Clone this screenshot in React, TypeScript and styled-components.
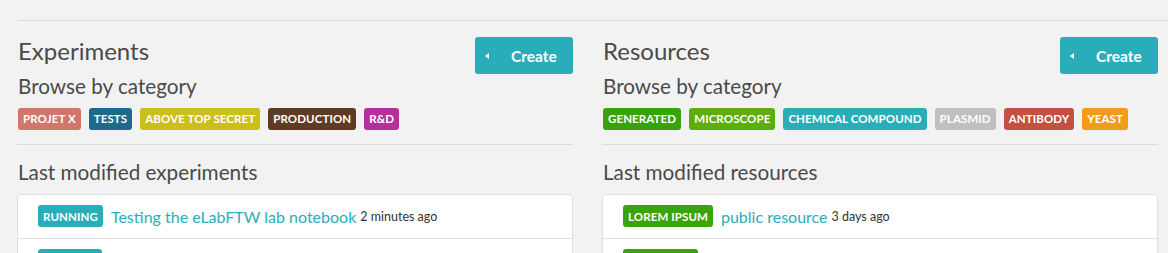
import React from "react";
import styled, { createGlobalStyle } from "styled-components";

const GlobalStyle = createGlobalStyle`
  html, body {
    margin: 0;
    padding: 0;
    background: #f2f2f2;
    font-family: "Lato", "Open Sans", sans-serif;
    color: #4a4a4a;
    overflow: hidden;
  }
`;

const Page = styled.div`
  padding: 20px 0 0 18px;
`;

const Section = styled.div`
  border-top: 1px solid #dcdcdc;
  display: grid;
  grid-template-columns: 554px 554px;
  column-gap: 31px;
  padding-top: 16px;
`;

const Column = styled.div`
  display: flex;
  flex-direction: column;
`;

const HeaderRow = styled.div`
  display: flex;
  justify-content: space-between;
  align-items: flex-start;
  height: 37px;
`;

const Title = styled.h2`
  margin: 0;
  font-size: 24px;
  font-weight: 400;
  line-height: 1.2;
  color: #4a4a4a;
`;

const SubTitle = styled.h3`
  margin: 0;
  font-size: 20.7px;
  font-weight: 400;
  line-height: 1.2;
  color: #4a4a4a;
`;

const CreateButton = styled.button`
  display: flex;
  align-items: center;
  height: 37px;
  width: 98px;
  margin-right: -1px;
  padding: 0 12px 0 10px;
  border: none;
  border-radius: 3px;
  background: #29aeb9;
  color: #fff;
  font-family: "Lato", sans-serif;
  font-size: 15.5px;
  font-weight: 700;
  cursor: pointer;
`;

const Caret = styled.span`
  width: 0;
  height: 0;
  border-top: 3.5px solid transparent;
  border-bottom: 3.5px solid transparent;
  border-right: 4px solid #fff;
  margin-right: 22px;
`;

const BadgeList = styled.div`
  display: flex;
  gap: 8px;
  margin-top: 9px;
`;

const Badge = styled.span<{ $bg: string }>`
  display: inline-flex;
  align-items: center;
  height: 22px;
  padding: 0 5px;
  border-radius: 3px;
  background: ${(p) => p.$bg};
  color: #fff;
  font-size: 11.5px;
  font-weight: 700;
  letter-spacing: 0.1px;
  text-transform: uppercase;
  white-space: nowrap;
`;

const Divider = styled.hr`
  border: none;
  border-top: 1px solid #dcdcdc;
  margin: 14px -1px 15px -1px;
`;

const Card = styled.div`
  margin: 9px -1px 0 -1px;
  background: #fff;
  border: 1px solid #e0e0e0;
  border-radius: 4px;
`;

const Row = styled.div`
  display: flex;
  align-items: center;
  gap: 8px;
  padding: 10.5px 20px;
  border-bottom: 1px solid #e0e0e0;
`;

// second rows are only visible as the top edge of their badge
const NextRow = styled(Row)`
  border-bottom: none;
  padding-bottom: 0;
`;

const BadgeStub = styled.span<{ $bg: string; $w: number }>`
  display: block;
  width: ${(p) => p.$w}px;
  height: 22px;
  border-radius: 3px;
  background: ${(p) => p.$bg};
`;

const ItemLink = styled.a`
  color: #29aeb9;
  font-size: 16px;
  text-decoration: none;
`;

const Ago = styled.span`
  margin-left: -4px;
  font-size: 12.5px;
  color: #333;
`;

type Cat = { name: string; color: string };

const expCats: Cat[] = [
  { name: "Projet X", color: "#d0766a" },
  { name: "Tests", color: "#1e6a8e" },
  { name: "Above top secret", color: "#cbbf1c" },
  { name: "Production", color: "#5f3b26" },
  { name: "R&D", color: "#b5309c" },
];

const resCats: Cat[] = [
  { name: "Generated", color: "#36a30b" },
  { name: "Microscope", color: "#5cad0d" },
  { name: "Chemical compound", color: "#29aeb9" },
  { name: "Plasmid", color: "#bfbfbf" },
  { name: "Antibody", color: "#c4503f" },
  { name: "Yeast", color: "#f09b1c" },
];

type Item = { status: string; color: string; title: string; ago: string };

const expItems: Item[] = [
  { status: "Running", color: "#29aeb9", title: "Testing the eLabFTW lab notebook", ago: "2 minutes ago" },
];

const resItems: Item[] = [
  { status: "Lorem ipsum", color: "#3aa40b", title: "public resource", ago: "3 days ago" },
];

const Panel = ({ title, cats, lastTitle, items, stubColor, stubWidth }: { title: string; cats: Cat[]; lastTitle: string; items: Item[]; stubColor: string; stubWidth: number }) => (
  <Column>
    <HeaderRow>
      <Title>{title}</Title>
      <CreateButton>
        <Caret />
        Create
      </CreateButton>
    </HeaderRow>
    <SubTitle>Browse by category</SubTitle>
    <BadgeList>
      {cats.map((c) => (
        <Badge key={c.name} $bg={c.color}>{c.name}</Badge>
      ))}
    </BadgeList>
    <Divider />
    <SubTitle>{lastTitle}</SubTitle>
    <Card>
      {items.map((it, i) => (
        <Row key={i}>
          <Badge $bg={it.color}>{it.status}</Badge>
          <ItemLink href="#">{it.title}</ItemLink>
          <Ago>{it.ago}</Ago>
        </Row>
      ))}
      <NextRow>
        <BadgeStub $bg={stubColor} $w={stubWidth} />
      </NextRow>
    </Card>
  </Column>
);

const App = () => (
  <>
    <GlobalStyle />
    <Page>
      <Section>
        <Panel title="Experiments" cats={expCats} lastTitle="Last modified experiments" items={expItems} stubColor="#29aeb9" stubWidth={64} />
        <Panel title="Resources" cats={resCats} lastTitle="Last modified resources" items={resItems} stubColor="#3aa40b" stubWidth={75} />
      </Section>
    </Page>
  </>
);

export default App;
